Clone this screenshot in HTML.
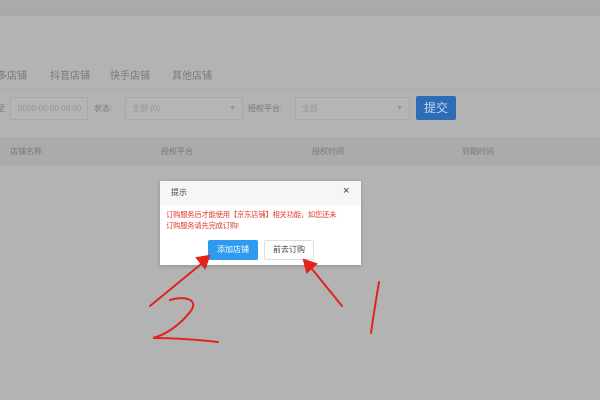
<!DOCTYPE html>
<html><head><meta charset="utf-8"><style>
body{margin:0;width:600px;height:400px;background:#b3b3b3;position:relative;overflow:hidden;font-family:"Liberation Sans","Noto Sans CJK SC",sans-serif;}
.a{position:absolute}
.t{font-size:10px;color:#787878}
.in{position:absolute;border:1px solid #a8a8a8;background:#b5b5b5;border-radius:2px;height:23px;top:97px;font-size:8px;color:#939393;line-height:21px;box-sizing:border-box;padding-left:6px;white-space:nowrap}
</style></head><body>
<div class="a" style="left:0;top:0;width:600px;height:15px;background:#aaaaaa"></div>
<div class="a" style="left:0;top:15px;width:600px;height:1px;background:#a6a6a6"></div>
<div class="a t" style="left:-3px;top:67px;">多店铺</div>
<div class="a t" style="left:50px;top:67px;">抖音店铺</div>
<div class="a t" style="left:110px;top:67px;">快手店铺</div>
<div class="a t" style="left:172px;top:67px;">其他店铺</div>
<div class="a" style="left:0;top:88px;width:600px;height:1px;background:#aeaeae"></div>
<div class="a t" style="left:-3px;top:103px;font-size:8px">至</div>
<div class="in" style="left:10px;width:78px;padding-left:7px">0000-00-00 00:00</div>
<div class="a t" style="left:94px;top:103px;font-size:8px">状态:</div>
<div class="in" style="left:125px;width:118px">全部 (0)<span style="position:absolute;right:6px;font-size:7px">▼</span></div>
<div class="a t" style="left:248px;top:103px;font-size:8px">授权平台:</div>
<div class="in" style="left:295px;width:115px">全部<span style="position:absolute;right:6px;font-size:7px">▼</span></div>
<div class="a" style="left:416px;top:96px;width:40px;height:24px;background:#2d6db8;border-radius:2px;color:#c7d6ea;font-size:12px;text-align:center;line-height:24px">提交</div>
<div class="a" style="left:0;top:137px;width:600px;height:28px;background:#ababab"></div>
<div class="a t" style="left:10px;top:146px;font-size:8px">店铺名称</div>
<div class="a t" style="left:161px;top:146px;font-size:8px">授权平台</div>
<div class="a t" style="left:312px;top:146px;font-size:8px">授权时间</div>
<div class="a t" style="left:462px;top:146px;font-size:8px">到期时间</div>
<div class="a" style="left:160px;top:181px;width:201px;height:84px;background:#fff;box-shadow:0 1px 4px rgba(0,0,0,.2)"></div>
<div class="a" style="left:160px;top:181px;width:201px;height:24px;background:#f6f6f6"></div>
<div class="a" style="left:171px;top:187px;font-size:8px;color:#444">提示</div>
<div class="a" style="left:343px;top:185px;font-size:11px;color:#333">×</div>
<div class="a" style="left:166px;top:209px;width:192px;font-size:7.3px;line-height:11px;color:#e03a2e;letter-spacing:-0.2px">订购服务后才能使用【京东店铺】相关功能，如您还未<br>订购服务请先完成订购!</div>
<div class="a" style="left:208px;top:240px;width:50px;height:20px;background:#2e9bf0;border-radius:2px;color:#fff;font-size:8px;text-align:center;line-height:20px">添加店铺</div>
<div class="a" style="left:264px;top:240px;width:48px;height:18px;border:1px solid #ddd;border-radius:2px;color:#444;font-size:8px;text-align:center;line-height:18px">前去订购</div>
<svg class="a" style="left:0;top:0" width="600" height="400" fill="none" stroke="#e2231a" stroke-width="2" stroke-linecap="round">
<path d="M150 306 L206 260"/><path d="M197 258 L209 256 L205 268 Z" fill="#e2231a"/>
<path d="M342 306 L308 264"/><path d="M304 260 L316 264 L307 272 Z" fill="#e2231a"/>
<path d="M170 300 C185 295,200 300,190 312 C180 325,165 335,153 338 C175 338,200 340,218 342"/>
<path d="M379 282 C376 300,373 318,371 333"/>
</svg>
</body></html>
